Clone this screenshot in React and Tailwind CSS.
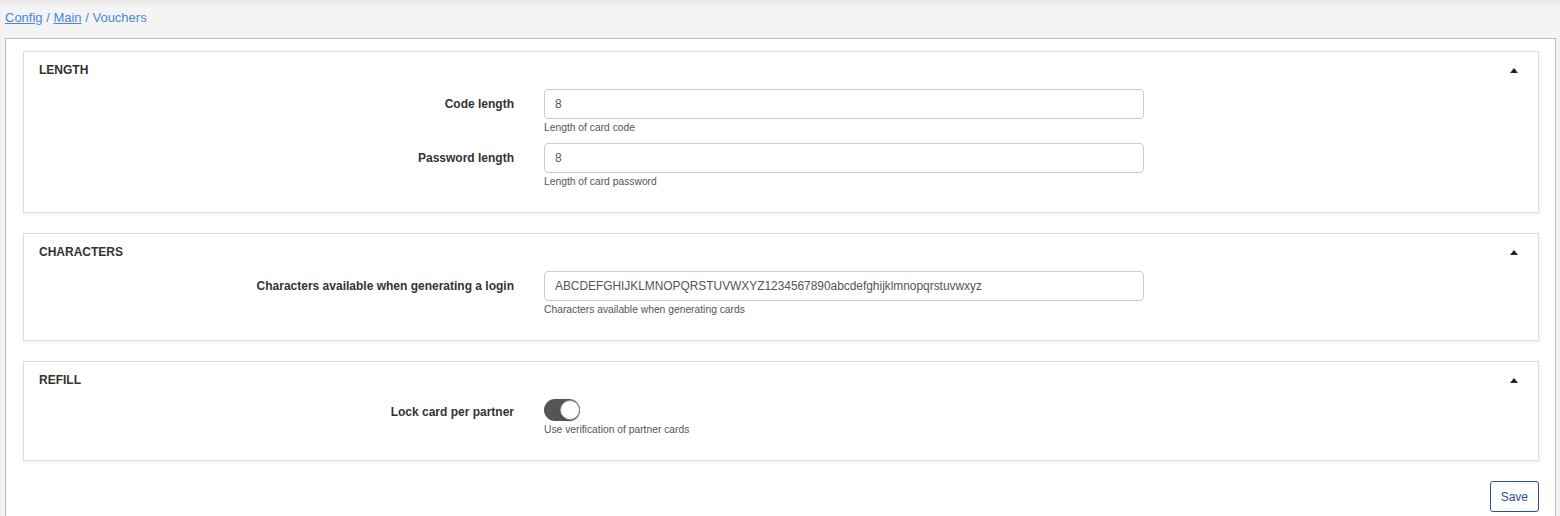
import { useState } from "react";

// Form sections for the vouchers config page
const sections = [
  {
    title: "LENGTH",
    rows: [
      { label: "Code length", value: "8", help: "Length of card code" },
      { label: "Password length", value: "8", help: "Length of card password" }
    ]
  },
  {
    title: "CHARACTERS",
    rows: [
      {
        label: "Characters available when generating a login",
        value: "ABCDEFGHIJKLMNOPQRSTUVWXYZ1234567890abcdefghijklmnopqrstuvwxyz",
        help: "Characters available when generating cards"
      }
    ]
  },
  {
    title: "REFILL",
    rows: [
      { label: "Lock card per partner", toggle: true, help: "Use verification of partner cards" }
    ]
  }
];

function Toggle({ on, onChange }) {
  return (
    <button
      type="button"
      onClick={() => onChange(!on)}
      className={`relative block w-[36px] h-[22px] rounded-full ${on ? "bg-[#555]" : "bg-[#ccc]"}`}>
      <span
        className={`absolute top-[1px] w-[20px] h-[20px] rounded-full bg-white border border-[#999] shadow-[0_1px_2px_rgba(0,0,0,0.3)] ${on ? "right-[0px]" : "left-[0px]"}`}
      />
    </button>
  );
}

function Section({ section }) {
  const [open, setOpen] = useState(true);
  const [lock, setLock] = useState(true);

  return (
    <div className="bg-white border border-[#dcdcdc] shadow-[0_1px_3px_rgba(0,0,0,0.08)]">
      <div className="flex justify-between pl-[15px] pr-[20px] pt-[11px] h-[37px]">
        <span className="text-[12px] font-bold text-[#333] leading-[14px]">{section.title}</span>
        <button type="button" onClick={() => setOpen(!open)} className="h-[5px] mt-[5px]">
          <svg width="8" height="5" viewBox="0 0 8 5" className="block">
            <path d={open ? "M0 5 L4 0 L8 5 Z" : "M0 0 L4 5 L8 0 Z"} fill="#222" />
          </svg>
        </button>
      </div>
      {open && (
        <div className="pb-[24px]">
          {section.rows.map((row, i) => (
            <div key={row.label} className={`flex ${i > 0 ? "mt-[9px]" : ""}`}>
              <label
                className={`w-[490px] text-right text-[12px] font-bold text-[#333] leading-[14px] ${row.toggle ? "pt-[6px]" : "pt-[8px]"}`}>
                {row.label}
              </label>
              <div className="ml-[30px] w-[600px]">
                {row.toggle ? (
                  <Toggle on={lock} onChange={setLock} />
                ) : (
                  <input
                    defaultValue={row.value}
                    className="block w-full h-[30px] border border-[#ccc] rounded-[4px] px-[10px] text-[11.9px] text-[#555] outline-none focus:border-[#66afe9]"
                  />
                )}
                <div className="text-[10.3px] text-[#555] mt-[3px] leading-[12px]">{row.help}</div>
              </div>
            </div>
          ))}
        </div>
      )}
    </div>
  );
}

export default function App() {
  return (
    <div className="min-h-screen bg-[#f4f4f4] font-['Liberation_Sans',Arial,sans-serif] shadow-[inset_0_5px_6px_-3px_rgba(0,0,0,0.08)]">
      <div className="h-[38px] px-[5px] pt-[8px] text-[13px] text-[#4a87d6]">
        <a href="#" className="underline">Config</a>
        <span> / </span>
        <a href="#" className="underline">Main</a>
        <span> / Vouchers</span>
      </div>
      <div className="ml-[5px] mr-[4px] border border-[#bdbdbd] bg-white pl-[17px] pr-[16px] pt-[12px] pb-[8px]">
        <div className="flex flex-col gap-[20px]">
          {sections.map(s => (
            <Section key={s.title} section={s} />
          ))}
        </div>
        <div className="flex justify-end mt-[20px]">
          <button
            type="button"
            className="h-[31px] px-[10px] border border-[#2d4f9e] rounded-[3px] text-[12px] text-[#2d4f9e] bg-white">
            Save
          </button>
        </div>
      </div>
    </div>
  );
}
